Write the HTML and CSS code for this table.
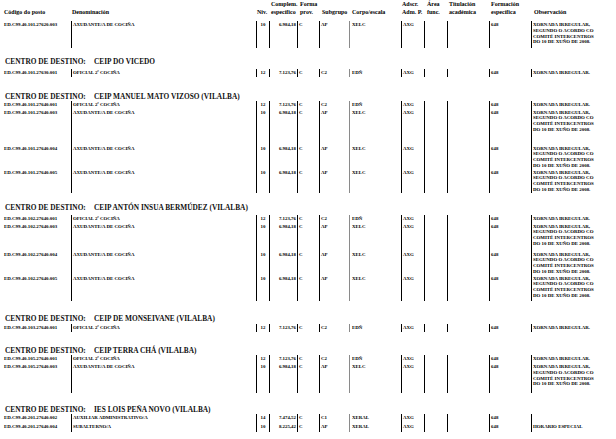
FILE: index.html
```html
<!DOCTYPE html>
<html lang="gl">
<head>
<meta charset="utf-8">
<title>Postos</title>
<link rel="stylesheet" href="styles.css">
</head>
<body>
<div class="page">
  <div class="head">
    <div class="hc h-code"><span></span><span>Código do posto</span></div>
    <div class="hc h-den"><span></span><span>Denominación</span></div>
    <div class="hc h-niv"><span></span><span>Niv.</span></div>
    <div class="hc h-cmp"><span>Complem.</span><span>específico</span></div>
    <div class="hc h-fp"><span>Forma</span><span>prov.</span></div>
    <div class="hc h-sg"><span></span><span>Subgrupo</span></div>
    <div class="hc h-ce"><span></span><span>Corpo/escala</span></div>
    <div class="hc h-ad"><span>Adscr.</span><span>Adm. P.</span></div>
    <div class="hc h-ar"><span>Área</span><span>func.</span></div>
    <div class="hc h-ti"><span>Titulación</span><span>académica</span></div>
    <div class="hc h-fo"><span>Formación</span><span>específica</span></div>
    <div class="hc h-ob"><span></span><span>Observación</span></div>
  </div>

  <div class="row h27">
    <div class="c code">ED.C99.40.101.27620.003</div><div class="c den">AXUDANTE/A DE COCIÑA</div><div class="c niv">10</div><div class="c cmp">6.984,18</div><div class="c fp">C</div><div class="c sg">AP</div><div class="c ce">XELC</div><div class="c ad">AXG</div><div class="c ar"></div><div class="c ti"></div><div class="c fo">648</div><div class="c ob">XORNADA IRREGULAR,<br>SEGUNDO O ACORDO CO<br>COMITÉ INTERCENTROS<br>DO 10 DE XUÑO DE 2008.</div>
  </div>

  <div class="sec s1"><span class="lbl">CENTRO DE DESTINO:</span><span>CEIP DO VICEDO</span></div>
  <div class="row h8">
    <div class="c code">ED.C99.40.101.27630.001</div><div class="c den">OFICIAL 2ª COCIÑA</div><div class="c niv">12</div><div class="c cmp">7.123,76</div><div class="c fp">C</div><div class="c sg">C2</div><div class="c ce">EDÑ</div><div class="c ad">AXG</div><div class="c ar"></div><div class="c ti"></div><div class="c fo">648</div><div class="c ob">XORNADA IRREGULAR.</div>
  </div>

  <div class="sec s2"><span class="lbl">CENTRO DE DESTINO:</span><span>CEIP MANUEL MATO VIZOSO (VILALBA)</span></div>
  <div class="row h8">
    <div class="c code">ED.C99.40.101.27640.001</div><div class="c den">OFICIAL 2ª COCIÑA</div><div class="c niv">12</div><div class="c cmp">7.123,76</div><div class="c fp">C</div><div class="c sg">C2</div><div class="c ce">EDÑ</div><div class="c ad">AXG</div><div class="c ar"></div><div class="c ti"></div><div class="c fo">648</div><div class="c ob">XORNADA IRREGULAR.</div>
  </div>
  <div class="row h36">
    <div class="c code">ED.C99.40.101.27640.003</div><div class="c den">AXUDANTE/A DE COCIÑA</div><div class="c niv">10</div><div class="c cmp">6.984,18</div><div class="c fp">C</div><div class="c sg">AP</div><div class="c ce">XELC</div><div class="c ad">AXG</div><div class="c ar"></div><div class="c ti"></div><div class="c fo">648</div><div class="c ob">XORNADA IRREGULAR,<br>SEGUNDO O ACORDO CO<br>COMITÉ INTERCENTROS<br>DO 10 DE XUÑO DE 2008.</div>
  </div>
  <div class="row h24">
    <div class="c code">ED.C99.40.101.27640.004</div><div class="c den">AXUDANTE/A DE COCIÑA</div><div class="c niv">10</div><div class="c cmp">6.984,18</div><div class="c fp">C</div><div class="c sg">AP</div><div class="c ce">XELC</div><div class="c ad">AXG</div><div class="c ar"></div><div class="c ti"></div><div class="c fo">648</div><div class="c ob">XORNADA IRREGULAR,<br>SEGUNDO O ACORDO CO<br>COMITÉ INTERCENTROS<br>DO 10 DE XUÑO DE 2008.</div>
  </div>
  <div class="row h24">
    <div class="c code">ED.C99.40.101.27640.005</div><div class="c den">AXUDANTE/A DE COCIÑA</div><div class="c niv">10</div><div class="c cmp">6.984,18</div><div class="c fp">C</div><div class="c sg">AP</div><div class="c ce">XELC</div><div class="c ad">AXG</div><div class="c ar"></div><div class="c ti"></div><div class="c fo">648</div><div class="c ob">XORNADA IRREGULAR,<br>SEGUNDO O ACORDO CO<br>COMITÉ INTERCENTROS<br>DO 10 DE XUÑO DE 2008.</div>
  </div>

  <div class="sec s3"><span class="lbl">CENTRO DE DESTINO:</span><span>CEIP ANTÓN INSUA BERMÚDEZ (VILALBA)</span></div>
  <div class="row h8">
    <div class="c code">ED.C99.40.102.27640.001</div><div class="c den">OFICIAL 2ª COCIÑA</div><div class="c niv">12</div><div class="c cmp">7.123,76</div><div class="c fp">C</div><div class="c sg">C2</div><div class="c ce">EDÑ</div><div class="c ad">AXG</div><div class="c ar"></div><div class="c ti"></div><div class="c fo">648</div><div class="c ob">XORNADA IRREGULAR.</div>
  </div>
  <div class="row h28">
    <div class="c code">ED.C99.40.102.27640.003</div><div class="c den">AXUDANTE/A DE COCIÑA</div><div class="c niv">10</div><div class="c cmp">6.984,18</div><div class="c fp">C</div><div class="c sg">AP</div><div class="c ce">XELC</div><div class="c ad">AXG</div><div class="c ar"></div><div class="c ti"></div><div class="c fo">648</div><div class="c ob">XORNADA IRREGULAR,<br>SEGUNDO O ACORDO CO<br>COMITÉ INTERCENTROS<br>DO 10 DE XUÑO DE 2008.</div>
  </div>
  <div class="row h24">
    <div class="c code">ED.C99.40.102.27640.004</div><div class="c den">AXUDANTE/A DE COCIÑA</div><div class="c niv">10</div><div class="c cmp">6.984,18</div><div class="c fp">C</div><div class="c sg">AP</div><div class="c ce">XELC</div><div class="c ad">AXG</div><div class="c ar"></div><div class="c ti"></div><div class="c fo">648</div><div class="c ob">XORNADA IRREGULAR,<br>SEGUNDO O ACORDO CO<br>COMITÉ INTERCENTROS<br>DO 10 DE XUÑO DE 2008.</div>
  </div>
  <div class="row h26">
    <div class="c code">ED.C99.40.102.27640.005</div><div class="c den">AXUDANTE/A DE COCIÑA</div><div class="c niv">10</div><div class="c cmp">6.984,18</div><div class="c fp">C</div><div class="c sg">AP</div><div class="c ce">XELC</div><div class="c ad">AXG</div><div class="c ar"></div><div class="c ti"></div><div class="c fo">648</div><div class="c ob">XORNADA IRREGULAR,<br>SEGUNDO O ACORDO CO<br>COMITÉ INTERCENTROS<br>DO 10 DE XUÑO DE 2008.</div>
  </div>

  <div class="sec s4"><span class="lbl">CENTRO DE DESTINO:</span><span>CEIP DE MONSEIVANE (VILALBA)</span></div>
  <div class="row h8">
    <div class="c code">ED.C99.40.103.27640.001</div><div class="c den">OFICIAL 2ª COCIÑA</div><div class="c niv">12</div><div class="c cmp">7.123,76</div><div class="c fp">C</div><div class="c sg">C2</div><div class="c ce">EDÑ</div><div class="c ad">AXG</div><div class="c ar"></div><div class="c ti"></div><div class="c fo">648</div><div class="c ob">XORNADA IRREGULAR.</div>
  </div>

  <div class="sec s5"><span class="lbl">CENTRO DE DESTINO:</span><span>CEIP TERRA CHÁ (VILALBA)</span></div>
  <div class="row h8">
    <div class="c code">ED.C99.40.105.27640.001</div><div class="c den">OFICIAL 2ª COCIÑA</div><div class="c niv">12</div><div class="c cmp">7.123,76</div><div class="c fp">C</div><div class="c sg">C2</div><div class="c ce">EDÑ</div><div class="c ad">AXG</div><div class="c ar"></div><div class="c ti"></div><div class="c fo">648</div><div class="c ob">XORNADA IRREGULAR.</div>
  </div>
  <div class="row h30">
    <div class="c code">ED.C99.40.105.27640.003</div><div class="c den">AXUDANTE/A DE COCIÑA</div><div class="c niv">10</div><div class="c cmp">6.984,18</div><div class="c fp">C</div><div class="c sg">AP</div><div class="c ce">XELC</div><div class="c ad">AXG</div><div class="c ar"></div><div class="c ti"></div><div class="c fo">648</div><div class="c ob">XORNADA IRREGULAR,<br>SEGUNDO O ACORDO CO<br>COMITÉ INTERCENTROS<br>DO 10 DE XUÑO DE 2008.</div>
  </div>

  <div class="sec s6"><span class="lbl">CENTRO DE DESTINO:</span><span>IES LOIS PEÑA NOVO (VILALBA)</span></div>
  <div class="row h9">
    <div class="c code">ED.C99.40.201.27640.002</div><div class="c den">AUXILIAR ADMINISTRATIVO/A</div><div class="c niv">14</div><div class="c cmp">7.474,52</div><div class="c fp">C</div><div class="c sg">C1</div><div class="c ce">XERAL</div><div class="c ad">AXG</div><div class="c ar"></div><div class="c ti"></div><div class="c fo">648</div><div class="c ob"></div>
  </div>
  <div class="row h9">
    <div class="c code">ED.C99.40.201.27640.004</div><div class="c den">SUBALTERNO/A</div><div class="c niv">10</div><div class="c cmp">8.225,42</div><div class="c fp">C</div><div class="c sg">AP</div><div class="c ce">XERAL</div><div class="c ad">AXG</div><div class="c ar"></div><div class="c ti"></div><div class="c fo">648</div><div class="c ob">HORARIO ESPECIAL</div>
  </div>
</div>
</body>
</html>
```

FILE: styles.css
```css
* { box-sizing: border-box; }
html, body { margin: 0; padding: 0; background: #fff; }
body {
  font-family: "Liberation Serif", "Times New Roman", serif;
  font-weight: bold;
  color: #000;
}
.page { width: 616px; height: 439px; overflow: hidden; }

.head, .row {
  display: grid;
  grid-template-columns: 71px 185px 13px 28px 22px 30px 52px 23px 23px 42px 42px 85px;
}

.head {
  font-size: 6px;
  line-height: 8px;
  height: 16px;
  margin-bottom: 5px;
}
.hc { display: flex; flex-direction: column; white-space: nowrap; }
.hc span { height: 8px; display: block; }
.h-code { padding-left: 4px; }
.h-den { padding-left: 1px; }
.h-niv { padding-left: 1px; }
.h-cmp { padding-left: 2px; }
.h-fp { padding-left: 3px; }
.h-sg { padding-left: 3px; }
.h-ce { padding-left: 3px; }
.h-ad { padding-left: 1px; }
.h-ar { padding-left: 3px; }
.h-ti { padding-left: 2px; }
.h-fo { padding-left: 2px; }
.h-ob { padding-left: 3px; }

.row {
  font-size: 4.9px;
  line-height: 5.8px;
}
.c {
  padding-top: 1px;
  white-space: nowrap;
  border-left: 1px solid #000;
}
.c.code { border-left: 0; padding-left: 4px; }
.c.den { padding-left: 1px; }
.c.niv { text-align: center; }
.c.cmp { text-align: right; padding-right: 1px; }
.c.fp { padding-left: 1px; }
.c.sg { padding-left: 1px; }
.c.ce { padding-left: 2px; border-left-color: #8a8a8a; }
.c.ad { padding-left: 1px; }
.c.fo { padding-left: 1px; }
.c.ob { padding-left: 1px; }

.h8 { height: 8px; }
.h9 { height: 9px; }
.h24 { height: 24px; }
.h26 { height: 26px; }
.h27 { height: 27px; }
.h28 { height: 28px; }
.h30 { height: 30px; }
.h36 { height: 36px; }

.sec {
  font-size: 7.35px;
  line-height: 9px;
  height: 9px;
  padding-left: 5px;
  display: flex;
  white-space: nowrap;
  color: #111;
}
.sec .lbl { width: 89px; }
.s1 { margin-top: 8.5px; margin-bottom: 3.5px; }
.s2 { margin-top: 14.5px; margin-bottom: 0; }
.s3 { margin-top: 10.5px; margin-bottom: 2.5px; }
.s4 { margin-top: 13.5px; margin-bottom: 0.5px; }
.s5 { margin-top: 14.5px; margin-bottom: 0; }
.s6 { margin-top: 11.5px; margin-bottom: 0.5px; }
```
